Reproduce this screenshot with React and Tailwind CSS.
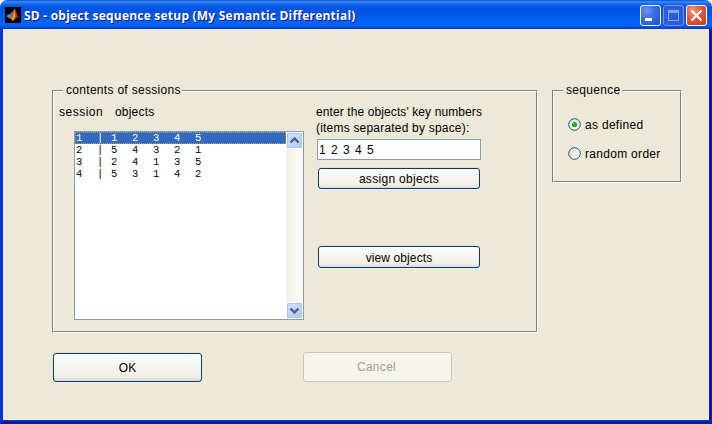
import React from "react";

function MatlabIcon() {
  return (
    <svg width="16" height="16" viewBox="0 0 16 16" className="shrink-0 bg-black">
      <path d="M1 9 L4.5 7 L7 9.5 L4.5 11.5 Z" fill="#4a9fb4" />
      <path d="M4.5 7 L7.5 4.5 L9.5 2 L7.5 8 L6 10 Z" fill="#4478a6" />
      <path d="M9.5 1.5 C8.5 4 7.5 8 4.5 11.5 C6.5 11 7 14 8 14 C10 13 10.5 10 12 10 L10.8 4 Z" fill="#d9531e" />
      <path d="M8 9 L9.8 3 L10.4 9 L8 13.5 L6.5 11.4 Z" fill="#f4a13a" />
      <path d="M10 2 C11.5 6 13 9.5 15 12 L12.4 10.2 L10.8 11 Z" fill="#a82c14" />
    </svg>
  );
}

const blueCaption =
  "bg-[radial-gradient(circle_at_30%_25%,#7096f2_0%,#3c6ee6_40%,#1d4fd0_100%)] border-white";

function CaptionButton({ className, children }) {
  return (
    <div className={`h-[21px] w-[21px] shrink-0 rounded-[3px] border ${className}`}>
      <svg width="19" height="19" viewBox="0 0 19 19" shapeRendering="crispEdges">
        {children}
      </svg>
    </div>
  );
}

function TitleBar() {
  return (
    <div className="flex h-[29px] items-start rounded-t-[7px] bg-[linear-gradient(180deg,#0a4fd0_0px,#3c8cf8_2px,#1268ee_4px,#0054e3_7px,#0055e5_14px,#0264fb_22px,#0363fd_25px,#0050dc_27px,#003bb8_29px)] pl-[5px] pr-[5px]">
      <div className="pt-[7px]">
        <MatlabIcon />
      </div>
      <div className="ml-[3px] mt-[8px] flex-1 whitespace-pre font-['Open_Sans',sans-serif] text-[12px] font-bold leading-4 tracking-[0.22px] text-white [text-shadow:1px_1px_0_#0a1883]">
        SD - object sequence setup (My Semantic Differential)
      </div>
      <div className="flex gap-[2px] pt-[5px]">
        <CaptionButton className={blueCaption}>
          <rect x="4" y="12" width="7" height="3" fill="#fff" />
        </CaptionButton>
        <CaptionButton className="border-[#6f97ee] bg-[#2a5cdc]">
          <path d="M4 4h11v11H4z M5 7v7h9V7z" fill="#8d9ff0" fillRule="evenodd" />
        </CaptionButton>
        <CaptionButton className="border-white bg-[radial-gradient(circle_at_30%_25%,#f09a80_0%,#e0583a_45%,#c8381a_100%)]">
          <path d="M4.5 4.5L14.5 14.5M14.5 4.5L4.5 14.5" stroke="#fff" strokeWidth="2.2" shapeRendering="auto" />
        </CaptionButton>
      </div>
    </div>
  );
}

function Group({ title, titleClass, className, children }) {
  return (
    <div className={`shrink-0 border border-b-white border-l-[#808080] border-r-white border-t-[#808080] ${className}`}>
      <div className="h-full border border-b-[#808080] border-l-white border-r-[#808080] border-t-white">
        <div className={`-mt-[10px] ml-[9px] h-4 whitespace-pre bg-[#ece9d8] pl-[3px] ${titleClass}`}>
          {title}
        </div>
        {children}
      </div>
    </div>
  );
}

function PushButton({ className, children }) {
  return (
    <button
      className={`flex items-center justify-center whitespace-pre rounded-[3px] border border-[#003c74] bg-[linear-gradient(180deg,#ffffff_0%,#f5f4ef_50%,#f0efe8_85%,#dcd8cd_100%)] shadow-[0_1px_0_#f6f4ea,0_-1px_0_#e2dfce] ${className}`}
    >
      {children}
    </button>
  );
}

function ScrollButton({ up }) {
  return (
    <div className="h-[17px] w-[17px] border border-white bg-[#b4c8f6]">
      <div className="h-[15px] w-[15px] rounded-[2px] border border-[#b0c4f2] bg-[linear-gradient(135deg,#d5e0fd,#b4c8fb)]">
        <svg width="13" height="13" viewBox="0 0 13 13" fill="none" stroke="#4d6185" strokeWidth="2.4">
          <path d={up ? "M2.5 8.5L6.5 4.5L10.5 8.5" : "M2.5 4.5L6.5 8.5L10.5 4.5"} />
        </svg>
      </div>
    </div>
  );
}

const rows = [
  "1  | 1  2  3  4  5",
  "2  | 5  4  3  2  1",
  "3  | 2  4  1  3  5",
  "4  | 5  3  1  4  2",
];

function SessionList() {
  return (
    <div className="ml-[20px] mt-[11px] flex h-[189px] w-[230px] border border-[#7f9db9] bg-white">
      <div className="flex-1 font-['Liberation_Mono',monospace] text-[10.5px] leading-3 tracking-[0.7px]">
        {rows.map((row, i) => (
          <div
            key={row}
            className={
              i === 0
                ? "h-3 whitespace-pre bg-[#316ac5] pl-[1px] text-white outline-dotted outline-1 -outline-offset-1 outline-[#ce953a]"
                : "h-3 whitespace-pre pl-[1px]"
            }
          >
            {row}
          </div>
        ))}
      </div>
      <div className="flex w-[17px] flex-col justify-between bg-[linear-gradient(90deg,#f0efe8,#fefefb)]">
        <ScrollButton up />
        <ScrollButton />
      </div>
    </div>
  );
}

function Radio({ checked, label }) {
  return (
    <div className="flex h-[13px] items-center gap-[4px]">
      <svg width="13" height="13" viewBox="0 0 13 13">
        <defs>
          <linearGradient id="well" x1="0" y1="0" x2="1" y2="1">
            <stop offset="0" stopColor="#dcdcd7" />
            <stop offset="1" stopColor="#ffffff" />
          </linearGradient>
        </defs>
        <circle cx="6.5" cy="6.5" r="5.8" fill="url(#well)" stroke="#1d5281" strokeWidth="1" />
        {checked && <circle cx="6.5" cy="6.5" r="2.6" fill="#21a121" />}
        {checked && <circle cx="5.8" cy="5.8" r="1" fill="#55d551" />}
      </svg>
      <span className="whitespace-pre tracking-[0.3px]">{label}</span>
    </div>
  );
}

export default function App() {
  return (
    <div className="h-[424px] w-[712px] overflow-hidden bg-[#f6f5ee] font-['Liberation_Sans',Arial,sans-serif] text-[12px] leading-4 text-black">
      <TitleBar />
      <div className="h-[395px] border-x-[3px] border-b-[3px] border-b-[#001ea0] border-l-[#0831d9] border-r-[#001ea0] bg-[#ece9d8] pl-[49px] pt-[61px] shadow-[inset_0_-1px_0_#0841d9]">
        <div className="flex items-start gap-[14px]">
          <Group title="contents of sessions" titleClass="w-[119px] tracking-[0.3px]" className="h-[243px] w-[486px]">
            <div className="flex pt-[6px]">
              <div className="w-[263px]">
                <div className="flex h-4 gap-[11px] whitespace-pre pl-[5px]">
                  <span className="w-[45px] tracking-[0.5px]">session</span>
                  <span className="tracking-[0.2px]">objects</span>
                </div>
                <SessionList />
              </div>
              <div className="-ml-[1px] w-[180px]">
                <div className="whitespace-pre tracking-[0.1px]">enter the objects' key numbers</div>
                <div className="whitespace-pre tracking-[0.2px]">(items separated by space):</div>
                <div className="ml-[1px] mt-[3px] flex h-[21px] w-[164px] items-center whitespace-pre border border-[#7f9db9] bg-white pl-[1px] [word-spacing:2px]">
                  1 2 3 4 5
                </div>
                <PushButton className="ml-[2px] mt-[8px] h-[21px] w-[162px] tracking-[0.3px]">assign objects</PushButton>
                <PushButton className="ml-[2px] mt-[57px] h-[22px] w-[162px] pt-[2px] tracking-[0.1px]">view objects</PushButton>
              </div>
            </div>
          </Group>
          <Group title="sequence" titleClass="w-[59px] tracking-[0.3px]" className="h-[93px] w-[130px]">
            <div className="flex flex-col gap-[16px] pl-[14px] pt-[20px]">
              <Radio checked label="as defined" />
              <Radio label="random order" />
            </div>
          </Group>
        </div>
        <div className="flex items-end gap-[101px] pl-[1px] pt-[19px]">
          <PushButton className="h-[29px] w-[149px]">OK</PushButton>
          <button className="h-[30px] w-[149px] rounded-[3px] border border-[#c9c7ba] bg-[#f5f4ea] pr-[2px] tracking-[0.3px] text-[#a1a192]">
            Cancel
          </button>
        </div>
      </div>
    </div>
  );
}
